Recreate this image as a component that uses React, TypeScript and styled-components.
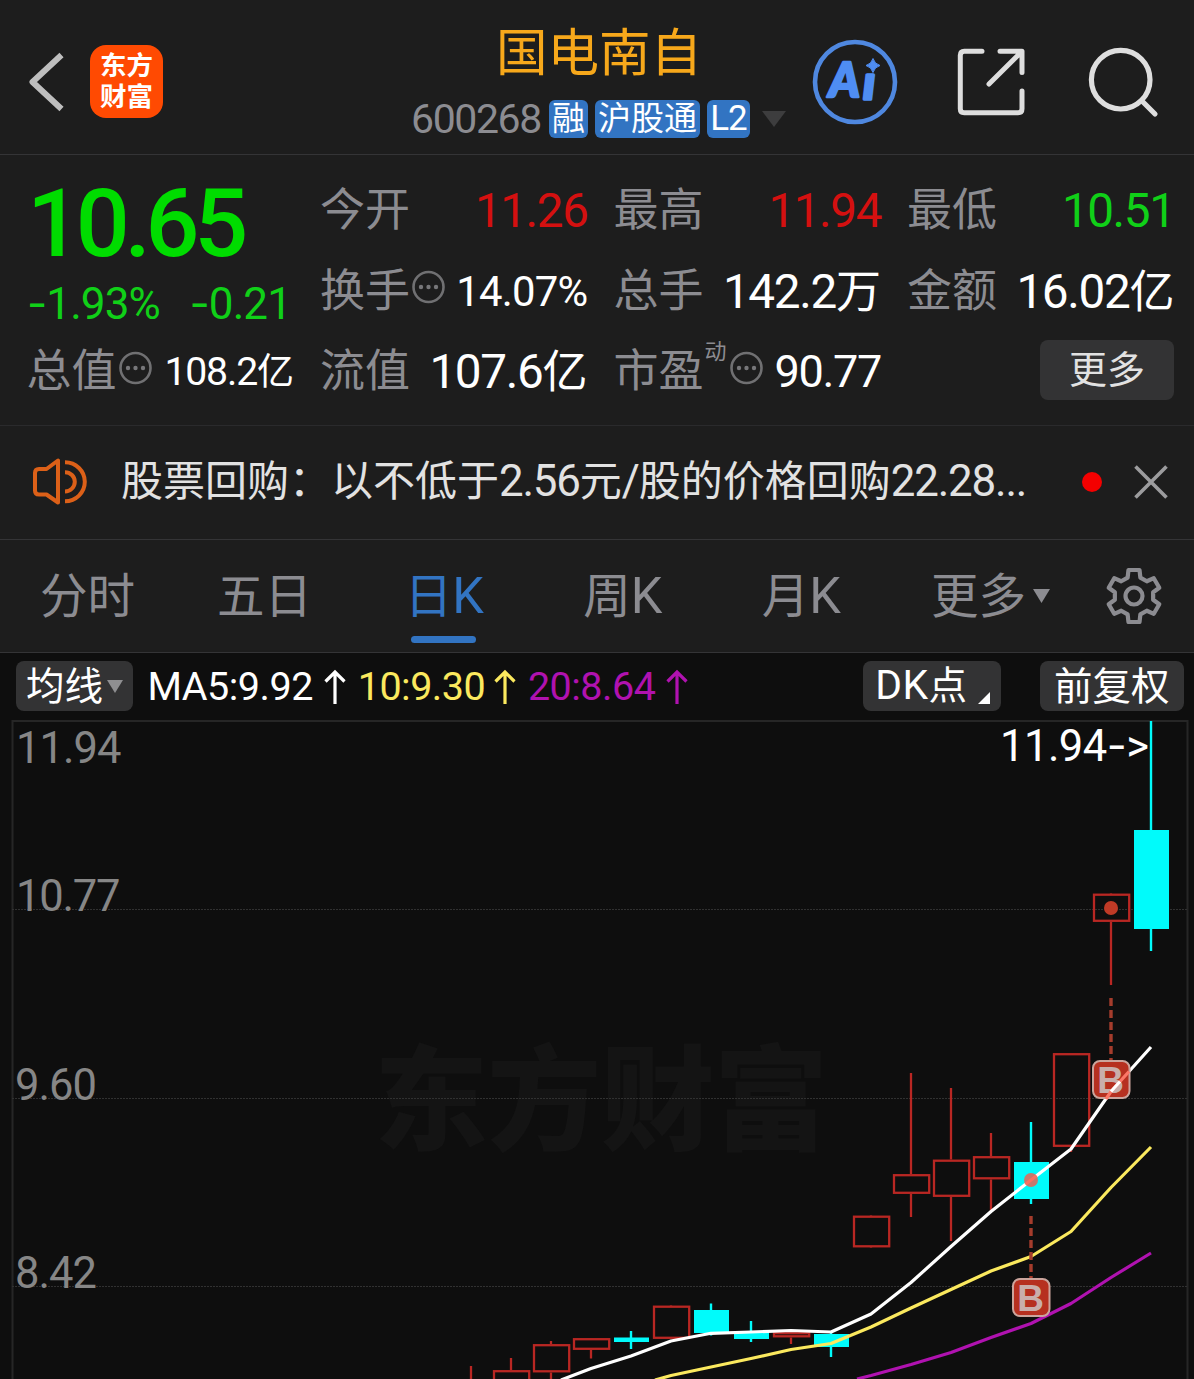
import React from "react";
import styled, { createGlobalStyle } from "styled-components";

const LATIN = `Roboto, "Noto Sans CJK SC", sans-serif`;
const CJK = `"Noto Sans CJK SC", sans-serif`;

const color = {
  panel: "#1d1d1d",
  chart: "#0e0e0e",
  line: "#343436",
  muted: "#8c8c91",
  text: "#e2e2e2",
  white: "#ffffff",
  up: "#d41010",
  down: "#10d018",
  accent: "#3274c2",
  orange: "#dc6018",
};

const GlobalStyle = createGlobalStyle`
  * { box-sizing: border-box; }
  body { margin: 0; background: ${color.chart}; }
`;

const Page = styled.div`
  width: 1194px;
  height: 1379px;
  overflow: hidden;
  display: flex;
  flex-direction: column;
  background: ${color.panel};
  font-family: ${CJK};
  white-space: nowrap;
`;

const Glyph = styled.svg`
  display: block;
  flex: none;
  fill: none;
  overflow: visible;
`;

/* ---------- text that mixes Chinese with digits ---------- */

const Run = styled.span<{ $scale: number; $track: number }>`
  font-family: ${LATIN};
  font-size: ${(p) => p.$scale}em;
  letter-spacing: ${(p) => p.$track}em;
`;

const Mixed = ({ text, scale = 1.06, track = -0.03 }: { text: string; scale?: number; track?: number }) => (
  <>
    {text.split(/([\x21-\x7e]+)/).map((part, i) =>
      i % 2 ? (
        <Run key={i} $scale={scale} $track={track}>
          {part}
        </Run>
      ) : (
        part
      ),
    )}
  </>
);

/* ---------- header ---------- */

const Header = styled.header`
  height: 155px;
  flex: none;
  display: grid;
  grid-template-columns: 411px 376px 1fr;
  border-bottom: 1px solid ${color.line};
`;

const HeaderLeft = styled.div`
  display: flex;
  align-items: center;
  gap: 25px;
  padding: 9px 0 0 28px;
`;

const Logo = styled.div`
  width: 73px;
  height: 73px;
  border-radius: 16px;
  background: #ff4a02;
  color: #fff;
  font-weight: 700;
  font-size: 26.5px;
  line-height: 31px;
  text-align: center;
  white-space: normal;
  padding: 3px 9px;
`;

const HeaderCentre = styled.div`
  display: flex;
  flex-direction: column;
  align-items: center;
`;

const Title = styled.h1`
  margin: 18px 0 0;
  font-size: 51.5px;
  font-weight: 400;
  line-height: 62px;
  color: #f7a81b;
`;

const CodeRow = styled.div`
  align-self: stretch;
  margin-top: 19px;
  display: flex;
  align-items: center;
  height: 39px;
`;

const Code = styled.span`
  width: 138px;
  font-family: ${LATIN};
  font-size: 41px;
  letter-spacing: -1.4px;
  line-height: 38px;
  color: ${color.muted};
`;

const Tag = styled.span<{ $w: number }>`
  width: ${(p) => p.$w}px;
  height: 38px;
  margin-right: 7px;
  border-radius: 6px;
  background: ${color.accent};
  color: #fff;
  font-size: 33px;
  line-height: 33px;
  text-align: center;
`;

const HeaderRight = styled.div`
  display: flex;
  align-items: center;
  padding: 9px 0 0 25px;
`;

const Spacer = styled.span<{ $w: number }>`
  width: ${(p) => p.$w}px;
  flex: none;
`;

/* ---------- quote ---------- */

const Quote = styled.section`
  height: 271px;
  flex: none;
  display: grid;
  grid-template-columns: repeat(4, 268px);
  grid-template-rows: repeat(3, 80.5px);
  column-gap: 25.5px;
  padding: 15px 0 0 27px;
  border-bottom: 1px solid #2a2a2c;
`;

const PriceCell = styled.div`
  grid-row: span 2;
  display: flex;
  flex-direction: column;
`;

const Price = styled.div`
  height: 100px;
  font-family: ${LATIN};
  font-weight: 500;
  font-size: 95px;
  letter-spacing: -5.3px;
  line-height: 108px;
  color: #00dc00;
`;

const Change = styled.div`
  display: flex;
  justify-content: space-between;
  padding: 5px 4px 0 0;
  font-family: ${LATIN};
  font-size: 44px;
  letter-spacing: -0.9px;
  line-height: 56px;
  color: ${color.down};
`;

const Dash = styled.span`
  font-family: Inter, sans-serif;
`;

const Cell = styled.div`
  display: flex;
  align-items: center;
  min-width: 0;
`;

const Label = styled.span`
  font-size: 45px;
  line-height: 60px;
  margin: 0 0 6px -0.5px;
  color: ${color.muted};
`;

const Super = styled.sup`
  align-self: flex-start;
  font-size: 22px;
  line-height: 30px;
  margin: 3px 1px 0 1px;
  color: ${color.muted};
`;

const Value = styled.span<{ $size?: number; $tone?: string }>`
  margin: 0 1px 1px auto;
  font-size: ${(p) => p.$size ?? 45}px;
  line-height: 60px;
  color: ${(p) => p.$tone ?? color.white};
`;

const MoreButton = styled.button`
  width: 134px;
  height: 60px;
  margin: 0 1.5px 2px auto;
  padding: 0 0 6px;
  border: 0;
  border-radius: 8px;
  background: #333334;
  color: ${color.text};
  font-family: ${CJK};
  font-size: 38px;
  line-height: 54px;
`;

const InfoDots = () => (
  <Glyph width="34" height="34" viewBox="-1.500 0 34 34" style={{ marginTop: -7 }}>
    <circle cx="17" cy="17" r="15" stroke="#707072" strokeWidth="2.6" />
    {[9.5, 17, 24.5].map((x) => (
      <circle key={x} cx={x} cy="17" r="2.2" fill="#77777a" />
    ))}
  </Glyph>
);

/* ---------- notice ---------- */

const Notice = styled.section`
  height: 114px;
  flex: none;
  display: flex;
  align-items: center;
  padding: 0 26.5px 2px 32px;
  border-bottom: 1px solid ${color.line};
`;

const NoticeText = styled.p`
  margin: 0 0 5px 33px;
  width: 962.5px;
  font-size: 42px;
  line-height: 60px;
  color: ${color.text};
`;

const UnreadDot = styled.i`
  width: 20px;
  height: 20px;
  flex: none;
  border-radius: 50%;
  background: #f40000;
  margin-right: 32px;
`;

/* ---------- tabs ---------- */

const Tabs = styled.nav`
  height: 113px;
  flex: none;
  display: grid;
  grid-template-columns: 175px 179px repeat(3, 178.5px) 209.5px 1fr;
  border-bottom: 1px solid ${color.line};
`;

const Tab = styled.div<{ $active?: boolean }>`
  display: flex;
  flex-direction: column;
  align-items: center;
  padding-top: 20px;
  font-size: 47.5px;
  line-height: 66px;
  color: ${(p) => (p.$active ? color.accent : color.muted)};

  &::after {
    content: "";
    width: 65px;
    height: 7px;
    margin-top: 7px;
    border-radius: 4px;
    background: ${(p) => (p.$active ? color.accent : "transparent")};
  }
`;

const TabLabel = styled.span`
  padding-left: 2px;
`;

const MoreTab = styled.div`
  display: flex;
  align-items: center;
  gap: 7px;
  padding: 0 0 1px 41.5px;
  font-size: 47.5px;
  line-height: 66px;
  color: ${color.muted};
`;

const MoreLabel = styled.span`
  padding-bottom: 6px;
`;

const GearCell = styled.div`
  display: flex;
  align-items: center;
  padding-left: 6px;
`;

/* ---------- indicator bar ---------- */

const Indicators = styled.div`
  height: 67px;
  flex: none;
  display: flex;
  align-items: center;
  padding: 0 10px 1px 16px;
  background: ${color.chart};
`;

const Chip = styled.button<{ $w: number }>`
  width: ${(p) => p.$w}px;
  height: 50px;
  flex: none;
  display: flex;
  align-items: center;
  justify-content: center;
  gap: 4px;
  padding: 0;
  border: 0;
  border-radius: 8px;
  background: #333334;
  color: #fff;
  font-family: ${CJK};
  font-size: 38.5px;
  line-height: 48px;
`;

const ChipLabel = styled.span`
  padding-bottom: 6px;
`;

const Average = styled.span<{ $tone: string; $w: number }>`
  width: ${(p) => p.$w}px;
  flex: none;
  display: flex;
  align-items: center;
  justify-content: space-between;
  margin-right: 12.2px;
  padding-top: 1px;
  font-family: ${LATIN};
  font-size: 39.5px;
  letter-spacing: -0.5px;
  line-height: 50px;
  color: ${(p) => p.$tone};
`;

const Arrow = () => (
  <Glyph width="22" height="36" viewBox="0 0 22 36">
    <path d="M11 35V3M1.5 12.5L11 3l9.500 9.500" stroke="currentColor" strokeWidth="3.2" />
  </Glyph>
);

/* ---------- chart ---------- */

const Chart = styled.svg`
  display: block;
  flex: none;
  background: ${color.chart};
`;

type Candle = { x: number; up: boolean; top: number; bottom: number; high: number; low: number };

const candles: Candle[] = [
  { x: 471, up: true, top: 1390, bottom: 1400, high: 1366, low: 1400 },
  { x: 511, up: true, top: 1370, bottom: 1400, high: 1358, low: 1400 },
  { x: 551, up: true, top: 1344, bottom: 1372.5, high: 1341, low: 1380 },
  { x: 591, up: true, top: 1338, bottom: 1350, high: 1338, low: 1358.5 },
  { x: 631, up: false, top: 1337.5, bottom: 1342, high: 1331, low: 1349 },
  { x: 671, up: true, top: 1305.5, bottom: 1339, high: 1305, low: 1339 },
  { x: 711, up: false, top: 1310, bottom: 1333, high: 1303.5, low: 1335.5 },
  { x: 751, up: false, top: 1333, bottom: 1339, high: 1321, low: 1342 },
  { x: 791, up: true, top: 1332, bottom: 1337.5, high: 1332, low: 1344 },
  { x: 831, up: false, top: 1334, bottom: 1347, high: 1332, low: 1357 },
  { x: 871, up: true, top: 1215.5, bottom: 1247.5, high: 1216, low: 1247 },
  { x: 911, up: true, top: 1174, bottom: 1194, high: 1073, low: 1217 },
  { x: 951, up: true, top: 1159.5, bottom: 1197, high: 1088, low: 1241 },
  { x: 991, up: true, top: 1156, bottom: 1179.5, high: 1133, low: 1212 },
  { x: 1031, up: false, top: 1162, bottom: 1199, high: 1122, low: 1204 },
  { x: 1071, up: true, top: 1053, bottom: 1147, high: 1053, low: 1152 },
  { x: 1111, up: true, top: 893.5, bottom: 922, high: 894, low: 985 },
  { x: 1151, up: false, top: 830, bottom: 929, high: 721, low: 951 },
];

const averages = [
  {
    stroke: "#b012b0",
    points: "857,1379 871,1375.500 911,1364.500 951,1352.500 991,1337.500 1031,1323.500 1071,1303.500 1111,1277.500 1151,1253",
  },
  {
    stroke: "#fbe95e",
    points:
      "655,1380 671,1375.500 711,1367 751,1358.500 791,1349.500 831,1343.500 871,1327 911,1308 951,1289.500 991,1271 1031,1256.500 1071,1231.500 1111,1187.500 1151,1147",
  },
  {
    stroke: "#ffffff",
    points:
      "561,1380 591,1368.500 631,1356 671,1341 711,1333.300 751,1332 791,1330.500 831,1332 871,1314 911,1282.500 951,1246.500 991,1211.500 1031,1180 1071,1149 1111,1091.500 1151,1047",
  },
];

const axis = [
  { label: "11.94", y: 762.5, x: 17, w: 105.5 },
  { label: "10.77", y: 910.5, x: 17, w: 104.5 },
  { label: "9.60", y: 1099.5, x: 16, w: 82 },
  { label: "8.42", y: 1287.5, x: 16, w: 82 },
];

const CandleMark = ({ x, up, top, bottom, high, low }: Candle) =>
  up ? (
    <g stroke="#b92723" strokeWidth="2.3" fill="none">
      <path d={`M${x} ${high}V${top}M${x} ${bottom}V${low}`} />
      <rect x={x - 17} y={top + 1.2} width="35.200" height={Math.max(bottom - top - 2.4, 1)} />
    </g>
  ) : (
    <g fill="#00fbfb">
      <rect x={x - 1.2} y={high} width="2.400" height={low - high} />
      <rect x={x - 17} y={top} width="35" height={bottom - top} />
    </g>
  );

const BuyMark = ({ x, y }: { x: number; y: number }) => (
  <g>
    <path d={`M${x} ${y - 62}V${y}`} stroke="#a53c2c" strokeWidth="3.4" strokeDasharray="8 4" />
    <rect x={x - 18} y={y + 1} width="36.500" height="37" rx="7" fill="#b63020" stroke="#cba49c" strokeWidth="2" />
    <text
      x={x - 0.5}
      y={y + 33}
      textAnchor="middle"
      fontFamily='"Liberation Sans", sans-serif'
      fontWeight="700"
      fontSize="37"
      fill="#c9aeab"
    >
      B
    </text>
  </g>
);

/* ---------- icons ---------- */

const Triangle = ({ w, h, fill }: { w: number; h: number; fill: string }) => (
  <Glyph width={w} height={h} viewBox="0 0 10 10" preserveAspectRatio="none">
    <path d="M0 0H10L5 10Z" fill={fill} />
  </Glyph>
);

const gearPath = (() => {
  const pts: string[] = [];
  for (let tooth = 0; tooth < 6; tooth++) {
    const corners: [number, number][] = [
      [-19, 19.5],
      [-12, 26.6],
      [12, 26.6],
      [19, 19.5],
    ];
    corners.forEach(([deg, r]) => {
      const a = ((tooth * 60 + deg) * Math.PI) / 180;
      pts.push(`${(r * Math.sin(a)).toFixed(2)},${(-r * Math.cos(a)).toFixed(2)}`);
    });
  }
  return `M${pts.join("L")}Z`;
})();

const Gear = () => (
  <Glyph width="58" height="58" viewBox="-29 -29 58 58" stroke={color.muted} strokeWidth="4.200">
    <path d={gearPath} strokeLinejoin="round" />
    <circle r="8.500" />
  </Glyph>
);

const Speaker = () => (
  <Glyph width="56" height="48" viewBox="32 458 56 48" stroke={color.orange} strokeWidth="4">
    <path d="M58 460.500V502.500L46.500 494.500H39Q35 494.500 35 490.500V473Q35 469 39 469H46.500Z" strokeLinejoin="round" />
    <path d="M65 462.300A19.800 19.500 0 0 1 65 501.300M65 472.200A9.800 9.600 0 0 1 65 491.400" />
  </Glyph>
);

export default function App() {
  return (
    <Page>
      <GlobalStyle />
      <Header>
        <HeaderLeft>
          <Glyph width="37" height="60" viewBox="28 52 37 60">
            <path d="M61.500 55L32.500 82L61.500 109" stroke="#bebebe" strokeWidth="6" strokeLinejoin="round" />
          </Glyph>
          <Logo>东方 财富</Logo>
        </HeaderLeft>
        <HeaderCentre>
          <Title>国电南自</Title>
          <CodeRow>
            <Code>600268</Code>
            <Tag $w={39}>融</Tag>
            <Tag $w={105}>沪股通</Tag>
            <Tag $w={43}>
              <Mixed text="L2" />
            </Tag>
            <Spacer $w={5} />
            <Triangle w={24} h={16} fill="#3d3d3e" />
          </CodeRow>
        </HeaderCentre>
        <HeaderRight>
          <Glyph width="86" height="86" viewBox="812 39 86 86">
            <circle cx="855" cy="82" r="40" stroke="#4f88e0" strokeWidth="4.600" />
            <g
              fill="#4f8df2"
              stroke="#4f8df2"
              strokeWidth="2.500"
              strokeLinejoin="round"
              fontFamily="Lato, sans-serif"
              fontWeight="900"
              fontStyle="italic"
            >
              <text x="829" y="96.500" fontSize="47">
                A
              </text>
              <text x="863.500" y="98.500" fontSize="45" strokeWidth="3.500">
                ı
              </text>
            </g>
            <path d="M873 58.500Q874.500 64 880 65.500Q874.500 67 873 72.500Q871.500 67 866 65.500Q871.500 64 873 58.500Z" fill="#4f8df2" stroke="#4f8df2" />
          </Glyph>
          <Spacer $w={57} />
          <Glyph width="72" height="70" viewBox="955 47 72 70" stroke="#dedede" strokeWidth="5" strokeLinecap="round" strokeLinejoin="round">
            <path d="M982 51.200H964.300Q960.300 51.200 960.300 55.200V108.700Q960.300 112.700 964.300 112.700H1018Q1022 112.700 1022 108.700V91" />
            <path d="M1000 51.200H1022V72.500M1021 52.200L989 84" />
          </Glyph>
          <Spacer $w={60} />
          <Glyph width="74" height="72" viewBox="1087 45 74 72" stroke="#dedede" strokeWidth="5.200" strokeLinecap="round">
            <circle cx="1120.700" cy="78.700" r="29.300" />
            <path d="M1142 100L1155 113" />
          </Glyph>
        </HeaderRight>
      </Header>

      <Quote>
        <PriceCell>
          <Price>10.65</Price>
          <Change>
            <span>
              <Dash>-</Dash>1.93%
            </span>
            <span>
              <Dash>-</Dash>0.21
            </span>
          </Change>
        </PriceCell>
        <Cell>
          <Label>今开</Label>
          <Value $tone={color.up}>
            <Mixed text="11.26" />
          </Value>
        </Cell>
        <Cell>
          <Label>最高</Label>
          <Value $tone={color.up}>
            <Mixed text="11.94" />
          </Value>
        </Cell>
        <Cell>
          <Label>最低</Label>
          <Value $tone={color.down}>
            <Mixed text="10.51" />
          </Value>
        </Cell>
        <Cell>
          <Label>换手</Label>
          <InfoDots />
          <Value $size={39.5}>
            <Mixed text="14.07%" track={-0.018} />
          </Value>
        </Cell>
        <Cell>
          <Label>总手</Label>
          <Value>
            <Mixed text="142.2万" track={-0.028} />
          </Value>
        </Cell>
        <Cell>
          <Label>金额</Label>
          <Value>
            <Mixed text="16.02亿" track={-0.028} />
          </Value>
        </Cell>
        <Cell>
          <Label>总值</Label>
          <InfoDots />
          <Value $size={37}>
            <Mixed text="108.2亿" />
          </Value>
        </Cell>
        <Cell>
          <Label>流值</Label>
          <Value>
            <Mixed text="107.6亿" track={-0.028} />
          </Value>
        </Cell>
        <Cell>
          <Label>市盈</Label>
          <Super>动</Super>
          <InfoDots />
          <Value $size={42.5}>
            <Mixed text="90.77" />
          </Value>
        </Cell>
        <Cell>
          <MoreButton>更多</MoreButton>
        </Cell>
      </Quote>

      <Notice>
        <Speaker />
        <NoticeText>
          <Mixed text="股票回购：以不低于2.56元/股的价格回购22.28..." scale={1.045} track={-0.027} />
        </NoticeText>
        <UnreadDot />
        <Glyph width="34" height="34" viewBox="0 0 34 34">
          <path d="M1.500 1.500L32.500 32.500M32.500 1.500L1.500 32.500" stroke="#9c9c9e" strokeWidth="3.600" />
        </Glyph>
      </Notice>

      <Tabs>
        <Tab>分时</Tab>
        <Tab>五日</Tab>
        <Tab $active>
          <TabLabel>
            <Mixed text="日K" track={0} />
          </TabLabel>
        </Tab>
        <Tab>
          <TabLabel>
            <Mixed text="周K" track={0} />
          </TabLabel>
        </Tab>
        <Tab>
          <TabLabel>
            <Mixed text="月K" track={0} />
          </TabLabel>
        </Tab>
        <MoreTab>
          <MoreLabel>更多</MoreLabel>
          <Triangle w={17} h={14} fill={color.muted} />
        </MoreTab>
        <GearCell>
          <Gear />
        </GearCell>
      </Tabs>

      <Indicators>
        <Chip $w={117}>
          <ChipLabel>均线</ChipLabel>
          <Triangle w={16} h={13} fill="#8f8f91" />
        </Chip>
        <Spacer $w={14.5} />
        <Average $tone="#ffffff" $w={198}>
          MA5:9.92
          <Arrow />
        </Average>
        <Average $tone="#fbe95e" $w={158}>
          10:9.30
          <Arrow />
        </Average>
        <Average $tone="#b012b0" $w={160}>
          20:8.64
          <Arrow />
        </Average>
        <Spacer $w={163} />
        <Chip $w={138}>
          <ChipLabel>
            <Mixed text="DK点" track={0.01} />
          </ChipLabel>
          <Glyph width="12" height="12" viewBox="-1 0 12 12" style={{ margin: "23px 0 0 6px" }}>
            <path d="M12 0V12H0Z" fill="#fff" />
          </Glyph>
        </Chip>
        <Spacer $w={39} />
        <Chip $w={143.5}>
          <ChipLabel>前复权</ChipLabel>
        </Chip>
      </Indicators>

      <Chart width="1194" height="659" viewBox="0 720 1194 659">
        <text x="374" y="1141" textLength="454" fontFamily={CJK} fontWeight="900" fontSize="114" fill="#141414">
          东方财富
        </text>
        <path d="M12.500 1379V721H1187.500V1379" fill="none" stroke="#262626" strokeWidth="2" />
        {[909.5, 1098.5, 1286.5].map((y) => (
          <path key={y} d={`M12 ${y}H1187`} stroke="#313131" strokeDasharray="2 1" />
        ))}
        {axis.map((a) => (
          <text key={a.label} x={a.x - 1} y={a.y} textLength={a.w} fontFamily={LATIN} fontSize="43.500" fill="#868686">
            {a.label}
          </text>
        ))}
        <text x="1000" y="760.500" textLength="149" fontFamily={LATIN} fontSize="43.500" fill="#fff">
          11.94<tspan fontFamily="Inter, sans-serif">-</tspan>&gt;
        </text>
        {candles.map((c) => (
          <CandleMark key={c.x} {...c} />
        ))}
        {averages.map((m) => (
          <polyline key={m.stroke} points={m.points} fill="none" stroke={m.stroke} strokeWidth="3.200" strokeLinejoin="round" />
        ))}
        <circle cx="1111" cy="908" r="7" fill="#c03a26" />
        <circle cx="1031" cy="1180" r="7" fill="#c47a6e" />
        <path d="M1025.500 1184.300L1031 1180L1036.500 1175.700" stroke="#fb7161" strokeWidth="3.200" fill="none" />
        <BuyMark x={1031} y={1278} />
        <BuyMark x={1111} y={1060} />
        <path d="M1106 1099L1111 1091.500L1129 1071.500" stroke="#fb7767" strokeWidth="3.200" fill="none" />
        <path d="M1111 1091.500L1120 1081.500" stroke="#fff" strokeWidth="3.200" />
      </Chart>
    </Page>
  );
}
